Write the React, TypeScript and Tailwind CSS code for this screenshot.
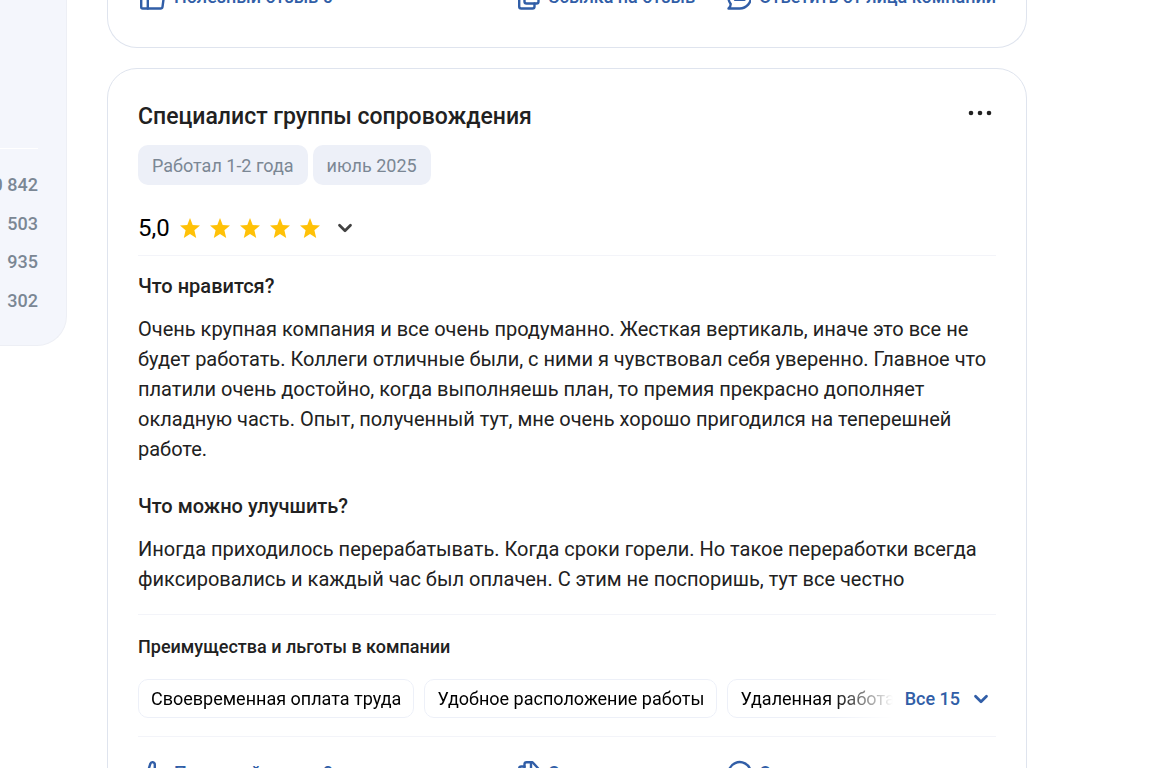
import React from 'react';
import { ChevronDown } from 'lucide-react';

const companyStats = ['10 842', '503', '935', '302'];

const ratingStars = [1, 2, 3, 4, 5];

const tags = ['Работал 1-2 года', 'июль 2025'];

const benefits = [
  'Своевременная оплата труда',
  'Удобное расположение работы',
  'Удаленная работа',
];

const ThumbIcon = () => (
  <svg className="h-[26px] w-7 shrink-0" viewBox="-2 0 28 26" fill="none" stroke="currentColor" strokeWidth="2.4" strokeLinecap="round" strokeLinejoin="round" aria-hidden="true">
    <path d="M7.8 12v12.5H2.7a1.5 1.5 0 0 1-1.5-1.5V13.5A1.5 1.5 0 0 1 2.7 12h5.1Z" />
    <path d="M7.8 12l2.5-8.2a2.3 2.3 0 0 1 4.5.7V9.500h7.200a2 2 0 0 1 2 2.300l-1.500 11a2 2 0 0 1-2 1.700H7.800" />
  </svg>
);

const CopyIcon = () => (
  <svg className="h-[26px] w-7 shrink-0" viewBox="-5 0 28 26" fill="none" stroke="currentColor" strokeWidth="2.4" strokeLinecap="round" strokeLinejoin="round" aria-hidden="true">
    <path d="M7.500 4.200a2 2 0 0 1 2-2h6l6 6.500v8.800a2 2 0 0 1-2 2h-10a2 2 0 0 1-2-2Z" />
    <path d="M14 2.200v7.500h7.500" />
    <path d="M7.500 6.500H4.200a2 2 0 0 0-2 2v14a2 2 0 0 0 2 2h11.300a2 2 0 0 0 2-2v-3" />
  </svg>
);

const ReplyIcon = () => (
  <svg className="h-[26px] w-7 shrink-0" viewBox="-4 0 28 26" fill="none" stroke="currentColor" strokeWidth="2.4" strokeLinecap="round" strokeLinejoin="round" aria-hidden="true">
    <path d="M1.500 24.500C3 23.300 3.700 22 3.700 20A11.200 11.200 0 1 1 12.200 24.500Z" />
    <path d="M8 11h9.500M8 15.800h9.500" />
  </svg>
);

const ReviewActions = () => (
  <div className="flex items-center justify-between text-lg leading-[26px] font-medium text-[#315ea7]">
    <button type="button" className="flex items-center gap-2">
      <ThumbIcon />
      Полезный отзыв 0
    </button>
    <div className="flex items-center gap-7">
      <button type="button" className="flex items-center gap-2">
        <CopyIcon />
        Ссылка на отзыв
      </button>
      <button type="button" className="flex items-center gap-2">
        <ReplyIcon />
        Ответить от лица компании
      </button>
    </div>
  </div>
);

const StarIcon = () => (
  <svg className="h-5 w-5" viewBox="0 0 20 20" fill="#ffc107" aria-hidden="true">
    <path d="M10 0l2.700 6.900 7.300.5-5.600 4.800L16.200 20 10 15.900 3.800 20l1.800-7.800L0 7.400l7.300-.5Z" />
  </svg>
);

const App = () => {
  return (
    <div className="h-screen overflow-hidden bg-white font-[Roboto,'Liberation_Sans',sans-serif] text-[#212121]">
      <div className="-mt-4 flex items-start gap-10 pr-[146px]">
        <aside className="w-[67px] shrink-0 overflow-hidden rounded-br-[30px] border-r border-b border-[#edeff5] bg-[#f4f6fc] pt-[164px] pr-7 pb-8">
          <ul className="flex h-[165px] flex-col items-end justify-between border-t border-white pt-6 text-lg leading-6 font-medium text-[#7b8794]">
            {companyStats.map((value) => (
              <li key={value} className="flex w-full justify-end whitespace-nowrap">
                {value}
              </li>
            ))}
          </ul>
        </aside>

        <main className="flex min-w-0 flex-1 flex-col gap-5">
          <article className="rounded-b-[30px] border border-t-0 border-[#dfe4ee] px-[30px] pb-[37px]">
            <ReviewActions />
          </article>

          <article className="rounded-[30px] border border-[#dfe4ee] px-[30px] pt-[33px] pb-[37px]">
            <header className="flex items-start justify-between">
              <h2 className="text-[23px] leading-[30px] font-medium">Специалист группы сопровождения</h2>
              <button type="button" aria-label="Ещё" className="pt-2 pr-1">
                <svg className="h-[6px] w-6" viewBox="0 0 24 6" fill="currentColor" aria-hidden="true">
                  <circle cx="3" cy="3" r="2.300" />
                  <circle cx="12" cy="3" r="2.300" />
                  <circle cx="21" cy="3" r="2.300" />
                </svg>
              </button>
            </header>

            <ul className="mt-[13px] flex gap-[5px] text-lg leading-6 text-[#7b8794]">
              {tags.map((tag) => (
                <li key={tag} className="rounded-[10px] bg-[#edf0f8] px-[14px] pt-[9px] pb-[7px]">
                  {tag}
                </li>
              ))}
            </ul>

            <div className="mt-7 flex h-[30px] items-center text-black">
              <span className="text-2xl leading-[30px]">5,0</span>
              <div className="ml-[10px] flex gap-[10px]">
                {ratingStars.map((star) => (
                  <StarIcon key={star} />
                ))}
              </div>
              <button type="button" aria-label="Подробные оценки" className="ml-[14px] text-[#424242]">
                <ChevronDown size={22} strokeWidth={3} />
              </button>
            </div>

            <section className="mt-3 border-t border-[#f3f4f9] pt-[15px]">
              <h3 className="text-xl leading-[30px] font-medium">Что нравится?</h3>
              <p className="mt-[13px] text-xl leading-[30px]">
                Очень крупная компания и все очень продуманно. Жесткая вертикаль, иначе это все не будет работать.
                Коллеги отличные были, с ними я чувствовал себя уверенно. Главное что платили очень достойно, когда
                выполняешь план, то премия прекрасно дополняет окладную часть. Опыт, полученный тут, мне очень хорошо
                пригодился на теперешней работе.
              </p>
            </section>

            <section className="mt-[27px]">
              <h3 className="text-xl leading-[30px] font-medium">Что можно улучшить?</h3>
              <p className="mt-[13px] text-xl leading-[30px]">
                Иногда приходилось перерабатывать. Когда сроки горели. Но такое переработки всегда фиксировались и
                каждый час был оплачен. С этим не поспоришь, тут все честно
              </p>
            </section>

            <section className="mt-5 border-y border-[#f3f4f9] pt-5 pb-[18px]">
              <h3 className="text-lg leading-6 font-medium">Преимущества и льготы в компании</h3>
              <div className="mt-5 flex items-center">
                <ul className="flex min-w-0 flex-1 gap-[10px] overflow-hidden mask-r-from-[calc(100%-60px)] text-lg leading-6 text-black">
                  {benefits.map((benefit) => (
                    <li key={benefit} className="shrink-0 rounded-[10px] border border-[#edf0f8] px-3 pt-[7px] pb-[6px]">
                      {benefit}
                    </li>
                  ))}
                </ul>
                <button type="button" className="flex shrink-0 items-center gap-[10px] pr-1 pl-3 text-lg leading-6 font-medium text-[#315ea7]">
                  Все 15
                  <ChevronDown size={22} strokeWidth={3} />
                </button>
              </div>
            </section>

            <div className="mt-[23px]">
              <ReviewActions />
            </div>
          </article>
        </main>
      </div>
    </div>
  );
};

export default App;
